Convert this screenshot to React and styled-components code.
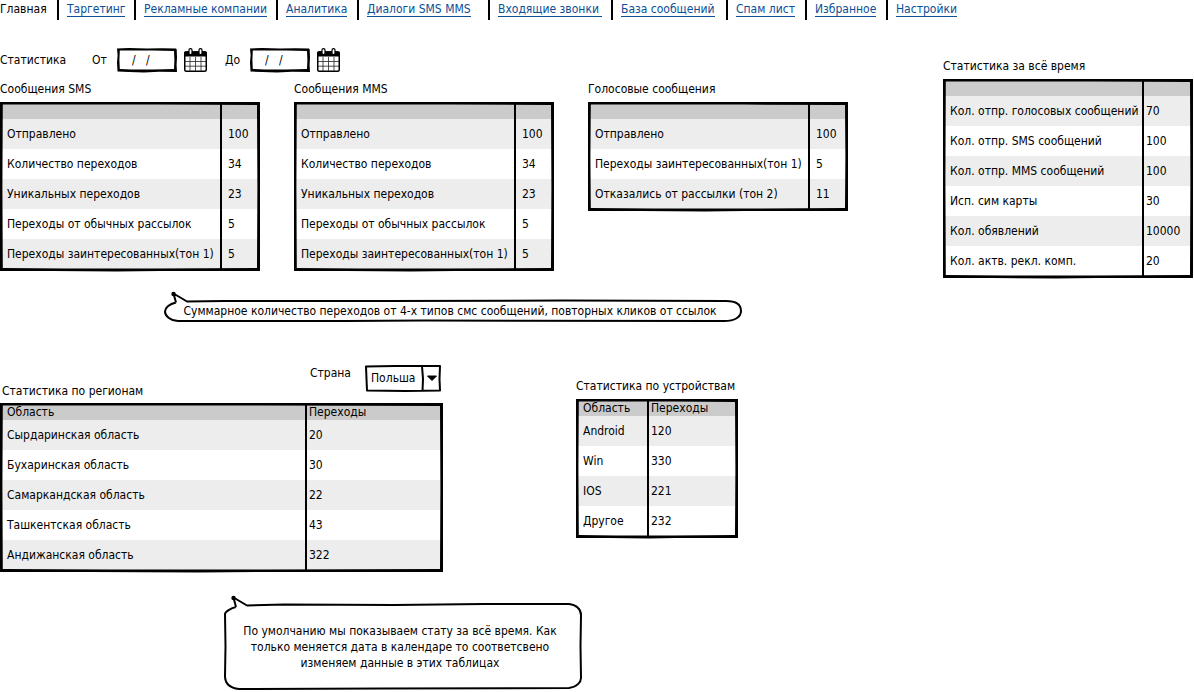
import React from "react";
import styled, { createGlobalStyle } from "styled-components";

const GlobalStyle = createGlobalStyle`
  *, *::before, *::after { box-sizing: border-box; }
  body {
    margin: 0;
    background: #fff;
    color: #000;
    font: 12px/16px "DejaVu Sans Condensed", "DejaVu Sans", sans-serif;
  }
  input, select, button { font: inherit; color: inherit; }
`;

const Nav = styled.nav`
  display: grid;
  grid-template-columns: 59px 77px 142px 81px 131px 123px 115px 79px 81px auto;
  justify-content: start;
`;

const NavItem = styled.div`
  display: flex;
  align-items: flex-start;
  height: 20px;
  padding: 2px 0 0 8px;
  border-right: 2px solid #000;
  white-space: pre;
  &:first-child { padding-left: 0; }
  &:last-child { border-right: 0; }
`;

const NavLink = styled.a`
  height: 15px;
  line-height: 15px;
  color: ${(p) => (p.$current ? "#000" : "#0b4f96")};
  border-bottom: ${(p) => (p.$current ? "0" : "1px solid #0b4f96")};
  text-decoration: none;
`;

const Main = styled.main`
  display: flex;
  align-items: flex-start;
  justify-content: space-between;
  gap: 24px;
  padding-right: 1px;
`;

const Content = styled.div`
  flex: 1;
  padding-top: 28px;
`;

const Aside = styled.aside`
  width: 250px;
  padding-top: 38px;
`;

const Filters = styled.form`
  display: flex;
  align-items: center;
  gap: 18px;
  height: 24px;
`;

const FilterTitle = styled.span`
  min-width: 74px;
`;

const FilterField = styled.div`
  display: flex;
  align-items: center;
  gap: 7px;
`;

const FieldLabel = styled.label`
  width: 18px;
`;

const DateBox = styled.div`
  position: relative;
  width: 60px;
  height: 24px;
`;

const DateInput = styled.input`
  width: 100%;
  height: 100%;
  padding: 0 0 0 15px;
  border: 0;
  background: transparent;
  outline: 0;
`;

const IconButton = styled.button`
  display: flex;
  padding: 0;
  border: 0;
  background: none;
`;

const FrameSvg = styled.svg`
  position: absolute;
  inset: 0;
  width: 100%;
  height: 100%;
  overflow: visible;
  pointer-events: none;
`;

const TableRow = styled.div`
  display: flex;
  align-items: flex-start;
  gap: ${(p) => p.$gap};
  margin-top: ${(p) => p.$top};
`;

const Panel = styled.section`
  width: ${(p) => p.$width};
  padding-top: ${(p) => p.$top || 0};
`;

const Title = styled.h2`
  margin: 0 0 5px;
  font: inherit;
  white-space: nowrap;
`;

const PanelHead = styled.div`
  display: flex;
  justify-content: space-between;
  align-items: flex-start;
  padding: 0 2px;
`;

const HeadTitle = styled(Title)`
  margin: 18px 0 4px;
`;

const SelectField = styled.div`
  display: flex;
  align-items: flex-start;
  gap: 11px;
`;

const SelectLabel = styled.label`
  min-width: 44px;
`;

const SelectBox = styled.div`
  position: relative;
  width: 76px;
  height: 27px;
`;

const Select = styled.select`
  width: 100%;
  height: 100%;
  padding: 0 20px 2px 6px;
  border: 0;
  appearance: none;
  background: transparent;
  outline: 0;
`;

const TableFrame = styled.div`
  position: relative;
`;

const Table = styled.table`
  width: 100%;
  border-collapse: separate;
  border-spacing: 0;
  table-layout: fixed;
  border: 2px solid #000;
  th, td {
    padding: 0 0 0 5px;
    text-align: left;
    font-weight: 400;
    white-space: nowrap;
  }
  th {
    height: 15px;
    line-height: 15px;
    background: #cbcbcb;
  }
  td { height: 30px; }
  tbody tr:nth-child(odd) { background: #ededed; }
  th + th, td + td {
    width: ${(p) => p.$valueWidth};
    padding-left: ${(p) => p.$valuePad};
    border-left: 2px solid #000;
  }
`;

const CalloutBox = styled.aside`
  position: relative;
  width: ${(p) => p.$width};
  margin: ${(p) => p.$margin};
  padding: ${(p) => p.$padding};
  text-align: center;
`;

/* Hand-drawn outline: a filled ring whose edges wander by about a pixel. */
function SketchFrame({ w, h }) {
  const outer = `M0 .5L${w * 0.2} 0L${w * 0.5} .4L${w * 0.75} .3L${w - 1} .6L${w - 0.3} 1.4L${w} ${h * 0.4}L${w - 0.4} ${h * 0.7}L${w} ${h}L${w * 0.7} ${h - 0.3}L${w * 0.45} ${h + 0.5}L${w * 0.2} ${h}L.5 ${h - 0.4}L0 ${h * 0.6}L.6 ${h * 0.3}Z`;
  const inner = `M2.8 2.6L${w * 0.3} 2.4L${w * 0.6} 2.6L${w - 3} 3L${w - 2.6} ${h * 0.5}L${w - 3} ${h - 3}L${w * 0.6} ${h - 2.4}L${w * 0.25} ${h - 2.6}L2.8 ${h - 3}L2.4 ${h * 0.5}Z`;
  return (
    <FrameSvg viewBox={`0 0 ${w} ${h}`} preserveAspectRatio="none" aria-hidden="true">
      <path fillRule="evenodd" d={outer + inner} />
    </FrameSvg>
  );
}

function DataTable({ head, rows, width, valueWidth, valuePad, label }) {
  return (
    <TableFrame>
      <Table $valueWidth={valueWidth} $valuePad={valuePad} aria-label={label}>
        <thead>
          <tr>
            <th scope="col">{head[0]}</th>
            <th scope="col">{head[1]}</th>
          </tr>
        </thead>
        <tbody>
          {rows.map(([name, value]) => (
            <tr key={name}>
              <td>{name}</td>
              <td>{value}</td>
            </tr>
          ))}
        </tbody>
      </Table>
      <SketchFrame w={width} h={19 + rows.length * 30} />
    </TableFrame>
  );
}

function Calendar() {
  return (
    <svg width="23" height="24" viewBox="0 0 23 24" aria-hidden="true">
      <rect x=".75" y="4" width="21.5" height="19.2" rx="1.5" fill="#fff" stroke="#000" strokeWidth="1.5" />
      <path d="M0 8.6V5Q0 3.2 2 3.2H21Q23 3.2 23 5V8.6Z" />
      <path d="M6 9V23M11.5 9V23M17 9V23M1 13.5H22M1 18.2H22" stroke="#222" strokeWidth=".8" />
      <rect x="5" y=".6" width="3" height="6" rx="1.4" fill="#fff" stroke="#000" strokeWidth="1.2" />
      <rect x="15" y=".6" width="3" height="6" rx="1.4" fill="#fff" stroke="#000" strokeWidth="1.2" />
    </svg>
  );
}

function DateField({ id, label }) {
  return (
    <FilterField>
      <FieldLabel htmlFor={id}>{label}</FieldLabel>
      <DateBox>
        <DateInput id={id} defaultValue="/   /" />
        <SketchFrame w={60} h={24} />
      </DateBox>
      <IconButton type="button" aria-label={`Календарь ${label}`}>
        <Calendar />
      </IconButton>
    </FilterField>
  );
}

const links = [
  "Главная",
  "Таргетинг",
  "Рекламные компании",
  "Аналитика",
  "Диалоги SMS MMS",
  "Входящие звонки ",
  "База сообщений",
  "Спам лист",
  "Избранное",
  "Настройки",
];

const messageRows = [
  ["Отправлено", "100"],
  ["Количество переходов", "34"],
  ["Уникальных переходов", "23"],
  ["Переходы от обычных рассылок", "5"],
  ["Переходы заинтересованных(тон 1)", "5"],
];

const voiceRows = [
  ["Отправлено", "100"],
  ["Переходы заинтересованных(тон 1)", "5"],
  ["Отказались от рассылки (тон 2)", "11"],
];

const totalRows = [
  ["Кол. отпр. голосовых сообщений", "70"],
  ["Кол. отпр. SMS сообщений", "100"],
  ["Кол. отпр. MMS сообщений", "100"],
  ["Исп. сим карты", "30"],
  ["Кол. обявлений", "10000"],
  ["Кол. актв. рекл. комп.", "20"],
];

const regionRows = [
  ["Сырдаринская область", "20"],
  ["Бухаринская область", "30"],
  ["Самаркандская область", "22"],
  ["Ташкентская область", "43"],
  ["Андижанская область", "322"],
];

const deviceRows = [
  ["Android", "120"],
  ["Win", "330"],
  ["IOS", "221"],
  ["Другое", "232"],
];

const messageTables = [
  ["Сообщения SMS", messageRows],
  ["Сообщения MMS", messageRows],
  ["Голосовые сообщения", voiceRows],
];

export default function App() {
  return (
    <>
      <GlobalStyle />
      <Nav>
        {links.map((text, i) => (
          <NavItem key={text}>
            <NavLink href="#" $current={i === 0} aria-current={i === 0 ? "page" : undefined}>
              {text}
            </NavLink>
          </NavItem>
        ))}
      </Nav>
      <Main>
        <Content>
          <Filters>
            <FilterTitle>Статистика</FilterTitle>
            <DateField id="from" label="От" />
            <DateField id="to" label="До" />
          </Filters>
          <TableRow $gap="34px" $top="9px">
            {messageTables.map(([title, rows]) => (
              <Panel key={title} $width="260px">
                <Title>{title}</Title>
                <DataTable label={title} head={["", ""]} rows={rows} width={260} valueWidth="38px" valuePad="6px" />
              </Panel>
            ))}
          </TableRow>
          <CalloutBox $width="578px" $margin="21px 0 0 164px" $padding="11px 22px 3px 16px">
            <FrameSvg viewBox="0 0 578 30" preserveAspectRatio="none" fill="none" stroke="#000" strokeWidth="2" strokeLinejoin="round" aria-hidden="true">
              <path d="M12 10.500C5 12 1 16 1 19.500C1 24 6 28.500 14 29L180 29L260 28.500L560 29C571 29 577 25 577 19C577 12 571 9 562 9L400 8.500L220 9L60 9L23 9.500L9.500 1.500L12 10.500" />
              <circle cx="9.500" cy="2" r="1.200" fill="#000" />
            </FrameSvg>
            Суммарное количество переходов от 4-х типов смс сообщений, повторных кликов от ссылок
          </CalloutBox>
          <TableRow $gap="133px" $top="43px">
            <Panel $width="443px">
              <PanelHead>
                <HeadTitle>Статистика по регионам</HeadTitle>
                <SelectField>
                  <SelectLabel htmlFor="country">Страна</SelectLabel>
                  <SelectBox>
                    <Select id="country" defaultValue="pl">
                      <option value="pl">Польша</option>
                    </Select>
                    <FrameSvg viewBox="0 0 76 27" fill="none" stroke="#000" strokeWidth="2" strokeLinejoin="round" aria-hidden="true">
                      <path d="M1 1.500L30 1L75 1L74.500 14L75 25.500L40 26L2 25.500L1.500 14ZM57 1L58 14L57.500 26" />
                      <path d="M62.500 11H71.500L67 15.500Z" fill="#000" strokeWidth="1" />
                    </FrameSvg>
                  </SelectBox>
                </SelectField>
              </PanelHead>
              <DataTable
                label="Статистика по регионам"
                head={["Область", "Переходы"]}
                rows={regionRows}
                width={443}
                valueWidth="136px"
                valuePad="2px"
              />
            </Panel>
            <Panel $width="162px" $top="13px">
              <Title>Статистика по устройствам</Title>
              <DataTable
                label="Статистика по устройствам"
                head={["Область", "Переходы"]}
                rows={deviceRows}
                width={162}
                valueWidth="89px"
                valuePad="2px"
              />
            </Panel>
          </TableRow>
          <CalloutBox $width="358px" $margin="24px 0 0 224px" $padding="27px 14px 19px 8px">
            <FrameSvg viewBox="0 0 358 94" preserveAspectRatio="none" fill="none" stroke="#000" strokeWidth="2" strokeLinejoin="round" aria-hidden="true">
              <path d="M12 11C7 12 1 16 1 18L1.500 50L1 80C1 88 6 92 15 93L160 92.500L345 92C353 91 357 86 357 82L356.500 50L357 19C357 13 352 8.500 345 8L260 8L170 9L60 8.500L23 9.500L9.500 1.500L12 11" />
              <circle cx="9.500" cy="2" r="1.200" fill="#000" />
            </FrameSvg>
            По умолчанию мы показываем стату за всё время. Как
            <br />
            только меняется дата в календаре то соответсвено
            <br />
            изменяем данные в этих таблицах
          </CalloutBox>
        </Content>
        <Aside>
          <Title>Статистика за всё время</Title>
          <DataTable label="Статистика за всё время" head={["", ""]} rows={totalRows} width={250} valueWidth="49px" valuePad="2px" />
        </Aside>
      </Main>
    </>
  );
}
